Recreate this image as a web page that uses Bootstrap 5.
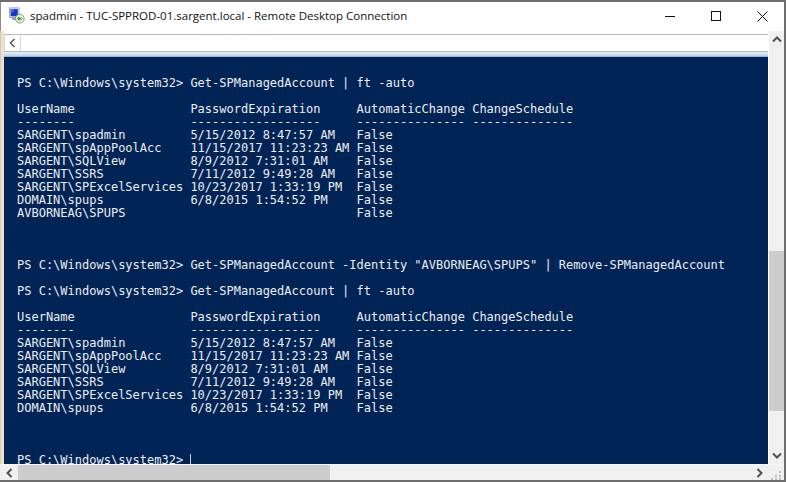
<!DOCTYPE html>
<html lang="en">
<head>
<meta charset="utf-8">
<title>Remote Desktop Connection</title>
<link href="https://cdn.jsdelivr.net/npm/bootstrap@5.3.0/dist/css/bootstrap.min.css" rel="stylesheet">
<style>
html, body { width: 786px; height: 482px; overflow: hidden; margin: 0; background: #fff; }
.rd-window { width: 786px; height: 482px; border-top: 2px solid #6e6e6e; border-right: 2px solid #6e6e6e; border-bottom: 2px solid #6e6e6e; background: #fff; }
.rd-title { height: 29px; border-left: 1px solid #8a8a8a; color: #111; padding-left: 29px; padding-bottom: 2px; flex: none; }
.rd-title-text { font-family: "Open Sans", sans-serif; font-size: 11.5px; white-space: nowrap; }
.rd-logo { position: absolute; left: 9px; top: 5px; }
.rd-ctls { margin-right: -1px; padding-top: 1px; }
.rd-ctl { width: 46px; height: 27px; }
.rd-body { min-height: 0; }
.rd-edge { width: 4px; background: #ece0cf; flex: none; border-left: 1px solid #d8c9b4; }
.rd-main { min-width: 0; }
.rd-gap { height: 3px; background: #fff; flex: none; }
.rd-bar { height: 17px; border-top: 1px solid #bcbcbc; flex: none; background: #fff; }
.rd-back { width: 17px; border-right: 1px solid #d9d9d9; border-left: 1px solid #d9d9d9; }
.rd-band { height: 6px; flex: none; border-top: 1px solid #b5b5b5; background: linear-gradient(#e8eef5, #c3d8ee 70%, #8fa6bf); }
.rd-term { background: #012456; color: #eeedf0; min-height: 0; overflow: hidden; padding: 20px 0 0 13px; font-family: "DejaVu Sans Mono", monospace; font-size: 12px; line-height: 13px; }
.rd-term pre { margin: 0; font: inherit; color: inherit; overflow: visible; }
.rd-caret { display: inline-block; width: 1px; height: 11px; background: #c9cdd4; vertical-align: -1px; }
.rd-hbar { height: 16px; background: #f0f0f0; flex: none; border-top: 1px solid #f7f7f7; }
.rd-hbtn { width: 18px; flex: none; }
.rd-hthumb { width: 312px; background: #cdcdcd; flex: none; }
.rd-grip { width: 16px; flex: none; }
.rd-vbar { width: 16px; background: #f0f0f0; flex: none; border-left: 1px solid #fff; }
.rd-vbtn { height: 17px; flex: none; }
.rd-vtrack-a { height: 203px; flex: none; }
.rd-vthumb { height: 160px; background: #cdcdcd; flex: none; }
</style>
</head>
<body>
<div class="rd-window d-flex flex-column position-relative">
  <div class="rd-title d-flex align-items-center">
    <svg class="rd-logo" width="16" height="17" viewBox="0 0 20 21" aria-hidden="true">
      <rect x="0.5" y="1" width="12" height="12" fill="#e8edf3" stroke="#8b98a8"/>
      <rect x="2" y="2.5" width="9" height="9" fill="#1a33c9"/>
      <rect x="2" y="2.5" width="4" height="4" fill="#4c6ff0"/>
      <path d="M3 13h8l2 3H4z" fill="#9aa3ad"/>
      <circle cx="13.5" cy="14.5" r="5.5" fill="#dff0d4" stroke="#6f8f68"/>
      <path d="M10.5 14.5l2-2v1.2h2v1.6h-2v1.2zM16.5 14.5l-1.5-1.5M16.5 14.5l-1.5 1.5" fill="#2f8f35" stroke="#2f8f35" stroke-width="0.8"/>
    </svg>
    <span class="rd-title-text flex-grow-1">spadmin - TUC-SPPROD-01.sargent.local - Remote Desktop Connection</span>
    <div class="rd-ctls d-flex">
      <div class="rd-ctl d-flex align-items-center justify-content-center"><svg width="11" height="11" viewBox="0 0 11 11"><path d="M0 5.5h10" stroke="#111" fill="none"/></svg></div>
      <div class="rd-ctl d-flex align-items-center justify-content-center"><svg width="11" height="11" viewBox="0 0 11 11"><rect x="0.5" y="0.5" width="9" height="9" stroke="#111" fill="none"/></svg></div>
      <div class="rd-ctl d-flex align-items-center justify-content-center"><svg width="11" height="11" viewBox="0 0 11 11"><path d="M0.5 0.5l10 10M10.5 0.5l-10 10" stroke="#111" fill="none"/></svg></div>
    </div>
  </div>
  <div class="rd-body d-flex flex-grow-1">
    <div class="rd-edge"></div>
    <div class="rd-main d-flex flex-column flex-grow-1">
      <div class="rd-gap"></div>
      <div class="rd-bar d-flex">
        <div class="rd-back d-flex align-items-center justify-content-center"><svg width="7" height="10" viewBox="0 0 7 10"><path d="M5.5 1L1.5 5l4 4" stroke="#555" stroke-width="1.5" fill="none"/></svg></div>
      </div>
      <div class="rd-band"></div>
      <div class="rd-term flex-grow-1"><pre>
PS C:\Windows\system32&gt; Get-SPManagedAccount | ft -auto

UserName                PasswordExpiration     AutomaticChange ChangeSchedule
--------                ------------------     --------------- --------------
SARGENT\spadmin         5/15/2012 8:47:57 AM   False
SARGENT\spAppPoolAcc    11/15/2017 11:23:23 AM False
SARGENT\SQLView         8/9/2012 7:31:01 AM    False
SARGENT\SSRS            7/11/2012 9:49:28 AM   False
SARGENT\SPExcelServices 10/23/2017 1:33:19 PM  False
DOMAIN\spups            6/8/2015 1:54:52 PM    False
AVBORNEAG\SPUPS                                False



PS C:\Windows\system32&gt; Get-SPManagedAccount -Identity "AVBORNEAG\SPUPS" | Remove-SPManagedAccount

PS C:\Windows\system32&gt; Get-SPManagedAccount | ft -auto

UserName                PasswordExpiration     AutomaticChange ChangeSchedule
--------                ------------------     --------------- --------------
SARGENT\spadmin         5/15/2012 8:47:57 AM   False
SARGENT\spAppPoolAcc    11/15/2017 11:23:23 AM False
SARGENT\SQLView         8/9/2012 7:31:01 AM    False
SARGENT\SSRS            7/11/2012 9:49:28 AM   False
SARGENT\SPExcelServices 10/23/2017 1:33:19 PM  False
DOMAIN\spups            6/8/2015 1:54:52 PM    False



PS C:\Windows\system32&gt; <span class="rd-caret"></span></pre></div>
    </div>
    <div class="rd-vbar d-flex flex-column">
      <div class="rd-vbtn d-flex align-items-center justify-content-center"><svg width="10" height="7" viewBox="0 0 10 7"><path d="M1 5.5l4-4 4 4" stroke="#505050" stroke-width="2" fill="none"/></svg></div>
      <div class="rd-vtrack-a"></div>
      <div class="rd-vthumb"></div>
      <div class="flex-grow-1"></div>
      <div class="rd-vbtn d-flex align-items-center justify-content-center"><svg width="10" height="7" viewBox="0 0 10 7"><path d="M1 1.5l4 4 4-4" stroke="#505050" stroke-width="2" fill="none"/></svg></div>
    </div>
  </div>
  <div class="rd-hbar d-flex">
    <div class="rd-hbtn d-flex align-items-center justify-content-center"><svg width="7" height="10" viewBox="0 0 7 10"><path d="M5.5 1L1.5 5l4 4" stroke="#505050" stroke-width="2" fill="none"/></svg></div>
    <div class="rd-hthumb"></div>
    <div class="flex-grow-1"></div>
    <div class="rd-hbtn d-flex align-items-center justify-content-center"><svg width="7" height="10" viewBox="0 0 7 10"><path d="M1.5 1l4 4-4 4" stroke="#505050" stroke-width="2" fill="none"/></svg></div>
    <div class="rd-grip d-flex align-items-end justify-content-center"><svg width="10" height="10" viewBox="0 0 10 10" aria-hidden="true"><path d="M8 1h2v2H8zM4 5h2v2H4zM8 5h2v2H8zM0 8h2v2H0zM4 8h2v2H4zM8 8h2v2H8z" fill="#bdbdbd"/></svg></div>
  </div>
</div>
<script src="https://cdn.jsdelivr.net/npm/bootstrap@5.3.0/dist/js/bootstrap.bundle.min.js"></script>
</body>
</html>
